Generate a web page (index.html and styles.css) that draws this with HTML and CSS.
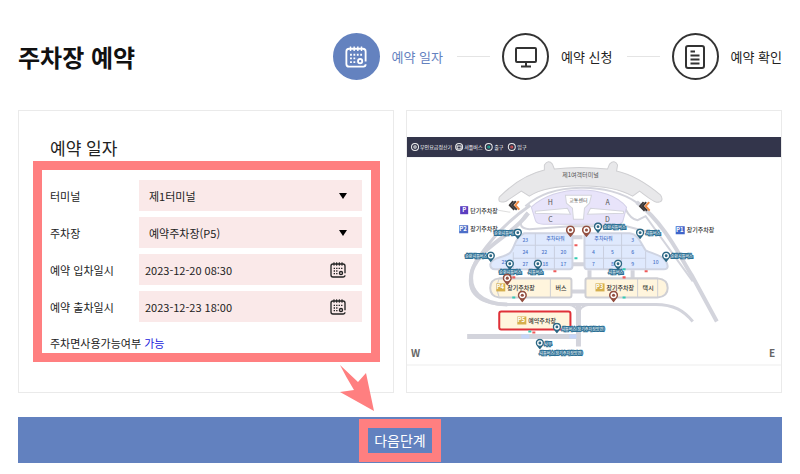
FILE: index.html
```html
<!DOCTYPE html>
<html lang="ko">
<head>
  <meta charset="UTF-8">
  <meta name="viewport" content="width=device-width, initial-scale=1">
  <title>주차장 예약</title>
  <link rel="stylesheet" href="styles.css">
</head>
<body>

  <!-- shared icons -->
  <svg class="defs" width="0" height="0" aria-hidden="true">
    <symbol id="calendar" viewBox="0 0 24 24">
      <path d="M7 3H4.500Q1.500 3 1.500 6V19.500Q1.500 22.500 4.500 22.500H20Q22.500 22.500 22.500 20M22.500 17V6Q22.500 3 19.500 3H7" fill="none" stroke="currentColor" stroke-width="2"/>
      <path d="M6 .5V5.500M10 .5V5.500M14 .5V5.500M18 .5V5.500" stroke="currentColor" stroke-width="1.600"/>
      <path d="M5.500 9.500H19M5.500 13.500H13M5.500 17.500H13" stroke="currentColor" stroke-width="2" stroke-dasharray="2 1.700"/>
      <circle cx="16.500" cy="16.500" r="2.300" fill="none" stroke="currentColor" stroke-width="2"/>
    </symbol>
    <symbol id="pin" viewBox="-4 -4 8 10">
      <path d="M0 6L-2.700 2.600A3.800 3.800 0 1 1 2.700 2.600Z" fill="currentColor"/>
      <circle r="2.500" fill="#fff"/>
      <circle r="1.300" fill="currentColor"/>
    </symbol>
    <symbol id="chevrons" viewBox="0 0 12 11">
      <g fill="none" stroke-width="2">
        <path d="M5 1L1.500 5L6 9.500" stroke="#3c3838"/>
        <path d="M7.500 1L4 5L8.500 9.500" stroke="#3c3838"/>
        <path d="M10.500 1L7 5L11 9.500" stroke="#f08a44"/>
      </g>
    </symbol>
  </svg>

  <!-- Header -->
  <header class="header">
    <h1 class="page-title">주차장 예약</h1>
    <ol class="steps">
      <li class="step active">
        <span class="step-icon"><svg width="22" height="22"><use href="#calendar"/></svg></span>
        <span>예약 일자</span>
      </li>
      <li class="step">
        <span class="step-icon">
          <svg width="24" height="24" viewBox="0 0 24 24" fill="none" stroke="currentColor" stroke-width="2">
            <rect x="2" y="3" width="20" height="14" rx="1"/>
            <path d="M12 17V21.500M7 21.500H17"/>
          </svg>
        </span>
        <span>예약 신청</span>
      </li>
      <li class="step">
        <span class="step-icon">
          <svg width="24" height="26" viewBox="0 0 24 26" fill="none" stroke="currentColor" stroke-width="2">
            <rect x="3" y="2" width="18" height="22" rx="2"/>
            <path d="M7.500 7.500H12M7.500 11.500H16.500M7.500 15.500H16.500M7.500 19.500H16.500"/>
          </svg>
        </span>
        <span>예약 확인</span>
      </li>
    </ol>
  </header>

  <form class="form">
    <main class="cards">

      <!-- Reservation dates -->
      <section class="card form-card">
        <h2 class="card-title">예약 일자</h2>
        <div class="highlight fields">
          <label for="terminal">터미널</label>
          <div class="field">
            <select id="terminal"><option>제1터미널</option></select>
            <svg class="field-icon" width="18" height="8" viewBox="0 0 18 8"><path d="M5 1H13L9 7Z"/></svg>
          </div>
          <label for="lot">주차장</label>
          <div class="field">
            <select id="lot"><option>예약주차장(P5)</option></select>
            <svg class="field-icon" width="18" height="8" viewBox="0 0 18 8"><path d="M5 1H13L9 7Z"/></svg>
          </div>
          <label for="dateIn">예약 입차일시</label>
          <div class="field">
            <input type="text" id="dateIn" value="2023-12-20 08:30">
            <svg class="field-icon calendar" width="16" height="16"><use href="#calendar"/></svg>
          </div>
          <label for="dateOut">예약 출차일시</label>
          <div class="field">
            <input type="text" id="dateOut" value="2023-12-23 18:00">
            <svg class="field-icon calendar" width="16" height="16"><use href="#calendar"/></svg>
          </div>
          <p class="status">주차면사용가능여부 <span class="available">가능</span></p>
        </div>
      </section>

      <!-- Parking map -->
      <section class="card map-card">
        <svg class="map" viewBox="407 137 373 228">
          <rect x="407" y="137" width="373" height="20" fill="#33354b"/>
          <path d="M407 364.500H780" stroke="#eee"/>

          <!-- legend -->
          <g fill="none" stroke="#eee">
            <circle cx="415" cy="147" r="3.500"/><circle cx="415" cy="147" r="1.200"/>
            <circle cx="459" cy="147" r="3.500"/><path d="M457 146H461V149H457Z"/>
            <circle cx="488.500" cy="147" r="3.500"/><circle cx="488.500" cy="147" r="1" stroke="#22b8a0"/>
            <circle cx="511.500" cy="147" r="3.500"/><circle cx="511.500" cy="147" r="1" stroke="#e05555"/>
          </g>
          <g class="legend-text">
            <text x="420" y="149">무인요금정산기</text>
            <text x="464" y="149">셔틀버스</text>
            <text x="494" y="149">출구</text>
            <text x="517" y="149">입구</text>
          </g>

          <!-- roads -->
          <g fill="none" stroke="#d3d4dc" stroke-width="4">
            <path d="M530 205C505 222 488 242 475 262C462 290 476 304 507 304H655C673 304 683 310 692 321" stroke-width="3"/>
            <path d="M528 213C512 236 481 245 472 270C467 290 481 304 507 304"/>
            <path d="M525 206C552 182 608 182 637 203" stroke-width="2"/>
            <path d="M636 202C665 224 680 258 691 275L716 321"/>
            <path d="M625 209Q630 219 637 220L645 216L692 281" stroke-width="2"/>
            <path d="M527 212C518 222 518 228 529 229L570 226H626L645 231" stroke-width="2"/>
            <path d="M467 336H576M578 305V346" stroke-width="5"/>
            <path d="M571 237H582M571 264H584M571 291H585M589 270V278M632 270V278"/>
            <path d="M567 304Q578 305 578 315Q578 305 590 304" stroke-width="2"/>
          </g>
          <path d="M521 336H529M569 336H576" stroke="#c6d5f8" stroke-width="4"/>

          <!-- terminal -->
          <path d="M499 197C511 185 527 174 544 170L544 165Q548 159 552 164L554 169Q578 166 607 169L609 164Q614 159 617 165L616 171C634 175 648 185 660 195Q664 202 656 202Q653 202 639 191L632 196C609 182 549 182 529 196L521 191L506 201Q497 204 499 197Z" fill="#e8e8ea" stroke="#cfcfd2"/>
          <text class="place" x="580" y="177">제1여객터미널</text>

          <!-- transport centre -->
          <path d="M531 207C554 184 608 184 626 207L622 222Q620 224 616 224H543Q536 224 535 220Z" fill="#e8e4fa" stroke="#d3d0e8"/>
          <path d="M535 211L567 208L570 214L535 213ZM623 211L590 208L587 214L623 213Z" fill="#fff" stroke="#d3d4dc"/>
          <path d="M565 195H591L589 203L584 208L583 219H573L572 208L566 203Z" fill="#fff" stroke="#d3d4dc"/>
          <text class="place centre" x="578" y="202">교통센터</text>
          <g class="zone">
            <text x="550" y="205">H</text><text x="607" y="205">A</text>
            <text x="550" y="222">C</text><text x="607" y="222">D</text>
          </g>

          <!-- long-term blocks -->
          <g fill="#dfe9fd" stroke="#cfd4e2" stroke-width="2">
            <path d="M524 233H569Q572 233 572 236V266Q572 269 569 269H495Q490 269 490 264C491 257 502 258 509 253C515 249 513 238 524 233Z"/>
            <path d="M586 233H629C638 234 640 243 645 250C652 254 666 255 667 266Q667 269 663 269H587Q584 269 584 266V236Q584 233 586 233Z"/>
          </g>
          <path d="M535 233V269M515 245H572M513 258H572M554 246V269M513 252V269M584 245H642M584 258H645M603 246V269M621 233V269M645 251V269" fill="none" stroke="#c9cfdf"/>
          <g class="bay">
            <text x="525" y="242">23</text><text x="555" y="240">주차타워</text><text x="603" y="240">주차타워</text><text x="632" y="242">3</text>
            <text x="525" y="254">24</text><text x="544" y="254">22</text><text x="563" y="254">20</text>
            <text x="593" y="254">4</text><text x="612" y="254">5</text><text x="632" y="254">6</text>
            <text x="504" y="264">25</text><text x="525" y="266">27</text><text x="545" y="266">18</text><text x="563" y="266">17</text>
            <text x="593" y="266">7</text><text x="612" y="266">8</text><text x="632" y="266">9</text><text x="655" y="264">10</text>
          </g>

          <!-- short-term blocks -->
          <g fill="#fff5dd" stroke="#cfcfd4" stroke-width="2">
            <path d="M499 278H569Q571 278 571 280V295Q571 297 569 297H499Q490 296 490 287.500Q490 279 499 278Z"/>
            <path d="M587 278H657Q667 279 667 287.500Q667 296 657 297H587Q585 297 585 295V280Q585 278 587 278Z"/>
            <path d="M550 278V297M637 278V297M657 278V297M499 278Q495 287 499 297" stroke-width="1"/>
          </g>
          <rect x="499" y="311" width="71" height="18" rx="2" fill="#fff5dd" stroke="#df3038" stroke-width="2"/>

          <!-- lot badges -->
          <g class="badge">
            <rect x="460" y="206" width="8" height="8" fill="#5b3dc0"/><text x="464" y="212">P</text>
            <rect x="459" y="225" width="9" height="8" fill="#4c6ec8"/><text x="463" y="231">P2</text>
            <rect x="675" y="226" width="9" height="8" fill="#3e65ca"/><text x="679" y="232">P1</text>
            <rect x="496" y="283" width="9" height="8" fill="#d5af4c"/><text x="500" y="289">P4</text>
            <rect x="595" y="283" width="9" height="8" fill="#d5af4c"/><text x="599" y="289">P3</text>
            <rect x="517" y="316" width="9" height="8" fill="#d5af4c"/><text x="521" y="322">P5</text>
          </g>
          <g class="lot">
            <text x="470" y="213">단기주차장</text>
            <text x="470" y="231">장기주차장</text>
            <text x="686" y="232">장기주차장</text>
            <text x="507" y="290">장기주차장</text>
            <text x="606" y="290">장기주차장</text>
            <text x="528" y="323">예약주차장</text>
            <text x="555" y="290">버스</text>
            <text x="642" y="290">택시</text>
          </g>

          <!-- bus stops -->
          <g class="stop">
            <text x="494" y="235">순환셔틀버스</text>
            <text x="465" y="258">순환셔틀버스</text>
            <text x="499" y="274">순환셔틀버스</text>
            <text x="528" y="274">셔틀버스</text>
            <text x="603" y="229">순환셔틀버스</text>
            <text x="645" y="235">셔틀버스</text>
            <text x="670" y="258">순환셔틀버스</text>
            <text x="608" y="274">셔틀버스</text>
            <text x="561" y="330">셔틀버스(장기주차장방면)</text>
            <text x="539" y="354">셔틀버스(장기주차장방면)</text>
            <text x="544" y="345">사무</text>
          </g>
          <g color="#2b6784">
            <use href="#pin" x="513" y="228" width="9" height="11"/>
            <use href="#pin" x="486" y="251" width="9" height="11"/>
            <use href="#pin" x="505" y="259" width="9" height="11"/>
            <use href="#pin" x="533" y="259" width="9" height="11"/>
            <use href="#pin" x="593" y="222" width="9" height="11"/>
            <use href="#pin" x="635" y="228" width="9" height="11"/>
            <use href="#pin" x="661" y="251" width="9" height="11"/>
            <use href="#pin" x="613" y="259" width="9" height="11"/>
            <use href="#pin" x="552" y="322" width="9" height="11"/>
            <use href="#pin" x="535" y="338" width="9" height="11"/>
          </g>
          <g color="#934f40">
            <use href="#pin" x="565" y="225" width="10" height="12"/>
            <use href="#pin" x="581" y="225" width="10" height="12"/>
            <use href="#pin" x="502" y="273" width="10" height="12"/>
            <use href="#pin" x="517" y="290" width="10" height="12"/>
            <use href="#pin" x="608" y="290" width="10" height="12"/>
          </g>
          <path d="M574 245h3M553 271h3M512 277h3M622 277h3M644 271h3M532 332h3" stroke="#ee5a5a" stroke-width="2"/>
          <path d="M574 258h3M512 297h3M622 297h3M622 269h3M528 331h3" stroke="#35cbb4" stroke-width="2"/>
          <path d="M498 210L510 212" stroke="#ddd"/>
          <use href="#chevrons" x="508" y="200" width="12" height="11"/>
          <use href="#chevrons" x="638" y="201" width="12" height="11"/>
          <text class="compass" x="411" y="356">W</text>
          <text class="compass" x="768" y="356">E</text>
        </svg>
      </section>
    </main>

    <div class="actions">
      <svg class="arrow" width="36" height="48" viewBox="0 0 36 48"><path d="M0 0L18 17L26 8L34 46L0 27L14 25Q6 12 0 0Z" fill="#ff7f80"/></svg>
      <button type="button" class="next-btn"><span class="highlight next-label">다음단계</span></button>
    </div>
  </form>

</body>
</html>
```
FILE: styles.css
```css
* { box-sizing: border-box; }
body {
  margin: 0; padding: 33px 18px 11px 18px;
  font-family: "Noto Sans CJK KR", sans-serif;
  font-size: 11px; color: #222; background: #fff;
}
h1, h2, p, ol { margin: 0; padding: 0; }
.defs { position: absolute; }

/* header + steps */
.header     { display: flex; justify-content: space-between; align-items: center; }
.page-title { font-size: 24px; line-height: 32px; font-weight: 700; color: #111; }
.steps      { display: flex; list-style: none; }
.step       { display: flex; align-items: center; gap: 12px; font-size: 13px; }
.step + .step::before { content: ""; width: 33px; margin-left: 14px; border-top: 1px solid #e4e4e4; }
.step-icon {
  display: flex; align-items: center; justify-content: center;
  width: 47px; height: 47px; border: 2px solid #333; border-radius: 50%; color: #333;
}
.step.active            { color: #6482bf; }
.step.active .step-icon { background: #6482bf; border-color: #6482bf; color: #fff; }

/* cards */
.cards      { display: grid; grid-template-columns: 1fr 1fr; gap: 12px; margin-top: 30px; }
.card       { border: 1px solid #eaeaea; min-width: 0; }
.form-card  { padding: 25px 13px 30px 14px; }
.map-card   { padding-top: 26px; }
.card-title { padding: 0 0 1px 17px; font-size: 17px; line-height: 24px; font-weight: 400; }
.highlight  { border: 9px solid #ff7f80; }

/* form */
.fields {
  display: grid; grid-template-columns: 89px 1fr; row-gap: 6px; align-items: center;
  padding: 10px 9px 0 8px;
}
.field { position: relative; height: 31px; background: #fae9e9; }
.field select, .field input {
  width: 100%; height: 100%; border: 0; background: none; appearance: none;
  font: inherit; color: inherit; padding: 0 36px 0 10px;
}
.field input      { padding-left: 6px; }
.field-icon       { position: absolute; right: 10px; top: 12px; pointer-events: none; }
.field-icon.calendar { right: 16px; top: 8px; }
.status    { grid-column: 1 / -1; margin-top: 5px; line-height: 20px; }
.available { color: #2019dc; }

/* map */
.map         { display: block; width: 100%; }
.legend-text { font-size: 5px; fill: #fff; }
.place       { font-size: 6px; fill: #555; text-anchor: middle; }
.centre      { font-size: 5px; }
.zone        { font-size: 7px; fill: #555; text-anchor: middle; }
.bay         { font-size: 5px; font-weight: 500; fill: #4d76c9; text-anchor: middle; }
.badge       { font-size: 6px; font-weight: 700; fill: #fff; text-anchor: middle; }
.lot         { font-size: 6px; font-weight: 500; fill: #333; }
.stop        { font-size: 4px; fill: #fff; stroke: #2d7095; stroke-width: 2px; paint-order: stroke; }
.compass     { font-size: 10px; font-weight: 700; fill: #666; }

/* next step */
.actions  { position: relative; margin-top: 24px; }
.arrow    { position: absolute; left: calc(50% - 60px); bottom: 50px; }
.next-btn {
  display: flex; justify-content: center; align-items: center;
  width: 100%; height: 46px; padding: 0; border: 0;
  background: #6281bf; color: #fff; font: inherit; cursor: pointer;
}
.next-label { padding: 0 6px; font-size: 14px; line-height: 25px; }
```
